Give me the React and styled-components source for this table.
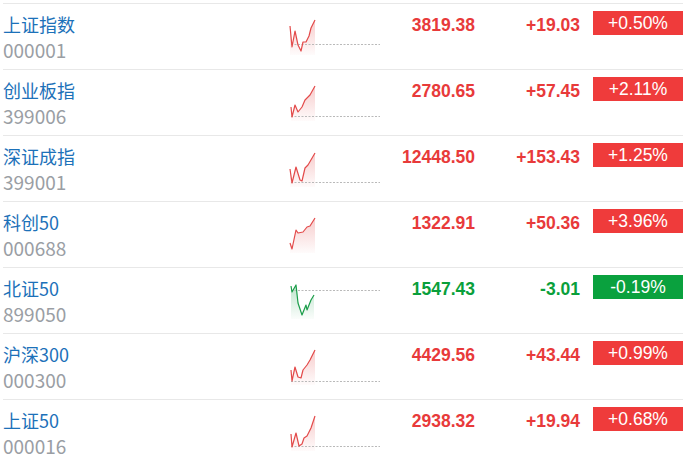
import React from "react";
import styled, { createGlobalStyle } from "styled-components";

const Global = createGlobalStyle`
  html, body { margin: 0; padding: 0; background: #fff; }
  body { width: 690px; height: 465px; overflow: hidden; }
`;

const RED = "#e83a3a";
const GREEN = "#0a9f3b";

const data = [
  { name: "上证指数", code: "000001", price: "3819.38", chg: "+19.03", pct: "+0.50%", up: true, base: 27,
    pts: [[2, 9], [4, 30], [7, 14], [10, 28], [13, 34], [15, 25], [18, 25], [21, 19], [23, 11], [27, 3]] },
  { name: "创业板指", code: "399006", price: "2780.65", chg: "+57.45", pct: "+2.11%", up: true, base: 33,
    pts: [[3, 24], [4, 34], [7, 22], [10, 29], [14, 24], [17, 17], [22, 12], [27, 3]] },
  { name: "深证成指", code: "399001", price: "12448.50", chg: "+153.43", pct: "+1.25%", up: true, base: 33,
    pts: [[2, 20], [4, 34], [8, 18], [12, 31], [14, 32], [17, 19], [20, 16], [27, 4]] },
  { name: "科创50", code: "000688", price: "1322.91", chg: "+50.36", pct: "+3.96%", up: true, base: null,
    pts: [[2, 28], [4, 34], [8, 15], [10, 18], [15, 17], [19, 12], [22, 11], [27, 3]] },
  { name: "北证50", code: "899050", price: "1547.43", chg: "-3.01", pct: "-0.19%", up: false, base: 9,
    pts: [[3, 5], [4, 11], [8, 4], [10, 22], [14, 34], [18, 24], [19, 29], [23, 19], [26, 14]] },
  { name: "沪深300", code: "000300", price: "4429.56", chg: "+43.44", pct: "+0.99%", up: true, base: 34,
    pts: [[3, 23], [4, 34], [7, 20], [10, 30], [13, 31], [15, 23], [19, 18], [22, 13], [27, 3]] },
  { name: "上证50", code: "000016", price: "2938.32", chg: "+19.94", pct: "+0.68%", up: true, base: 33,
    pts: [[3, 21], [4, 34], [8, 20], [11, 33], [14, 31], [16, 25], [19, 23], [23, 15], [27, 3]] },
];

const List = styled.div`
  width: 690px;
  padding: 3px 7px 0 3px;
  box-sizing: border-box;
`;

const Row = styled.div`
  display: grid;
  grid-template-columns: 285px 93px 94px 105px 103px;
  height: 66px;
  box-sizing: border-box;
  border-top: 1px solid #e8e8e8;
`;

const NameCell = styled.div`
  display: flex;
  flex-direction: column;
  padding-top: 8px;
`;

const Name = styled.a`
  font-family: "Noto Sans CJK SC", "Microsoft YaHei", sans-serif;
  font-size: 18px;
  line-height: 25px;
  color: #1c71b9;
  text-decoration: none;
`;

const Code = styled.span`
  font-family: "Noto Sans CJK SC", sans-serif;
  font-size: 19px;
  line-height: 25px;
  color: #9a9ea4;
`;

const ChartCell = styled.div`
  padding-top: 13px;
`;

const Num = styled.div`
  font-family: "Liberation Sans", Arial, sans-serif;
  font-weight: bold;
  font-size: 17.5px;
  line-height: 20px;
  padding-top: 11px;
  text-align: right;
  color: ${(p) => (p.$up ? RED : GREEN)};
`;

const BadgeCell = styled.div`
  display: flex;
  justify-content: flex-end;
  padding-top: 7px;
`;

const Badge = styled.span`
  width: 90px;
  height: 24px;
  display: flex;
  align-items: center;
  justify-content: center;
  background: ${(p) => (p.$up ? "#ef3b3b" : "#0aa13e")};
  color: #fff;
  font-family: "Liberation Sans", Arial, sans-serif;
  font-size: 17.5px;
`;

function Spark({ pts, base, up, id }) {
  const W = 93, H = 38;
  const line = pts.map((p) => p.join(",")).join(" ");
  const first = pts[0], last = pts[pts.length - 1];
  const area = `${first[0]},${H} ${line} ${last[0]},${H}`;
  const c = up ? "#e34a4a" : "#1a9d49";
  return (
    <svg width={W} height={H} viewBox={`0 0 ${W} ${H}`}>
      <defs>
        <linearGradient id={id} x1="0" y1="0" x2="0" y2="1">
          <stop offset="0" stopColor={c} stopOpacity="0.28" />
          <stop offset="1" stopColor={c} stopOpacity="0.02" />
        </linearGradient>
      </defs>
      <polygon points={area} fill={`url(#${id})`} />
      {base != null && (
        <line x1="3" x2="92" y1={base + 0.5} y2={base + 0.5} stroke="#b9b9b9" strokeWidth="1" strokeDasharray="2 1.5" />
      )}
      <polyline points={line} fill="none" stroke={c} strokeWidth="1.2" strokeLinejoin="round" />
    </svg>
  );
}

export default function App() {
  return (
    <>
      <Global />
      <List>
        {data.map((d, i) => (
          <Row key={d.code}>
            <NameCell>
              <Name href="#">{d.name}</Name>
              <Code>{d.code}</Code>
            </NameCell>
            <ChartCell>
              <Spark pts={d.pts} base={d.base} up={d.up} id={`g${i}`} />
            </ChartCell>
            <Num $up={d.up}>{d.price}</Num>
            <Num $up={d.up}>{d.chg}</Num>
            <BadgeCell>
              <Badge $up={d.up}>{d.pct}</Badge>
            </BadgeCell>
          </Row>
        ))}
      </List>
    </>
  );
}
